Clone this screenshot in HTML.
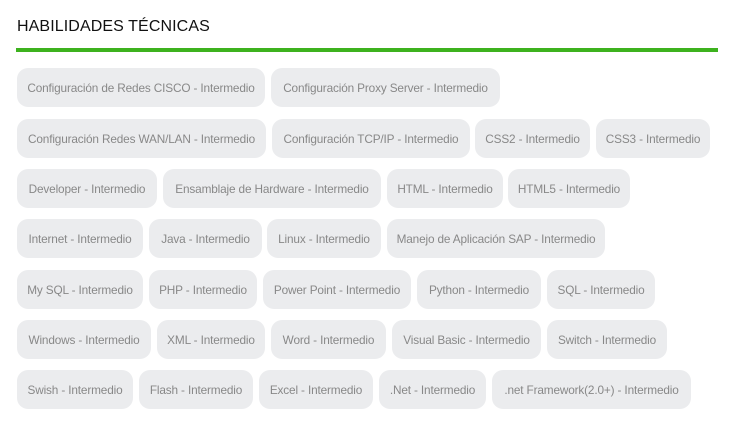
<!DOCTYPE html>
<html><head><meta charset="utf-8"><style>
html,body{margin:0;padding:0;background:#fff;width:746px;height:423px;overflow:hidden;font-family:"Liberation Sans",sans-serif}
.t{position:absolute;left:17px;top:18px;font-size:16px;color:#111;letter-spacing:0.1px}
.line{position:absolute;left:16px;top:48px;width:702px;height:4px;background:#3db21e}
.p{position:absolute;height:39px;line-height:41px;background:#ebecee;border-radius:11px;color:#888;font-size:11.8px;text-align:center;white-space:nowrap;overflow:hidden;letter-spacing:-0.15px}
</style></head><body>
<div class="t">HABILIDADES TÉCNICAS</div>
<div class="line"></div>
<div class="p" style="left:17px;top:68px;width:248px">Configuración de Redes CISCO - Intermedio</div>
<div class="p" style="left:271px;top:68px;width:229px">Configuración Proxy Server - Intermedio</div>

<div class="p" style="left:17px;top:119px;width:249px">Configuración Redes WAN/LAN - Intermedio</div>
<div class="p" style="left:272px;top:119px;width:198px">Configuración TCP/IP - Intermedio</div>
<div class="p" style="left:475px;top:119px;width:115px">CSS2 - Intermedio</div>
<div class="p" style="left:596px;top:119px;width:114px">CSS3 - Intermedio</div>

<div class="p" style="left:17px;top:169px;width:140px">Developer - Intermedio</div>
<div class="p" style="left:163px;top:169px;width:218px">Ensamblaje de Hardware - Intermedio</div>
<div class="p" style="left:387px;top:169px;width:116px">HTML - Intermedio</div>
<div class="p" style="left:508px;top:169px;width:122px">HTML5 - Intermedio</div>

<div class="p" style="left:17px;top:219px;width:126px">Internet - Intermedio</div>
<div class="p" style="left:149px;top:219px;width:113px">Java - Intermedio</div>
<div class="p" style="left:267px;top:219px;width:114px">Linux - Intermedio</div>
<div class="p" style="left:387px;top:219px;width:218px">Manejo de Aplicación SAP - Intermedio</div>

<div class="p" style="left:17px;top:270px;width:126px">My SQL - Intermedio</div>
<div class="p" style="left:149px;top:270px;width:108px">PHP - Intermedio</div>
<div class="p" style="left:263px;top:270px;width:148px">Power Point - Intermedio</div>
<div class="p" style="left:417px;top:270px;width:124px">Python - Intermedio</div>
<div class="p" style="left:547px;top:270px;width:108px">SQL - Intermedio</div>

<div class="p" style="left:17px;top:320px;width:134px">Windows - Intermedio</div>
<div class="p" style="left:157px;top:320px;width:108px">XML - Intermedio</div>
<div class="p" style="left:271px;top:320px;width:115px">Word - Intermedio</div>
<div class="p" style="left:392px;top:320px;width:149px">Visual Basic - Intermedio</div>
<div class="p" style="left:547px;top:320px;width:120px">Switch - Intermedio</div>

<div class="p" style="left:17px;top:370px;width:116px">Swish - Intermedio</div>
<div class="p" style="left:139px;top:370px;width:114px">Flash - Intermedio</div>
<div class="p" style="left:259px;top:370px;width:114px">Excel - Intermedio</div>
<div class="p" style="left:379px;top:370px;width:107px">.Net - Intermedio</div>
<div class="p" style="left:492px;top:370px;width:199px">.net Framework(2.0+) - Intermedio</div>
</body></html>
